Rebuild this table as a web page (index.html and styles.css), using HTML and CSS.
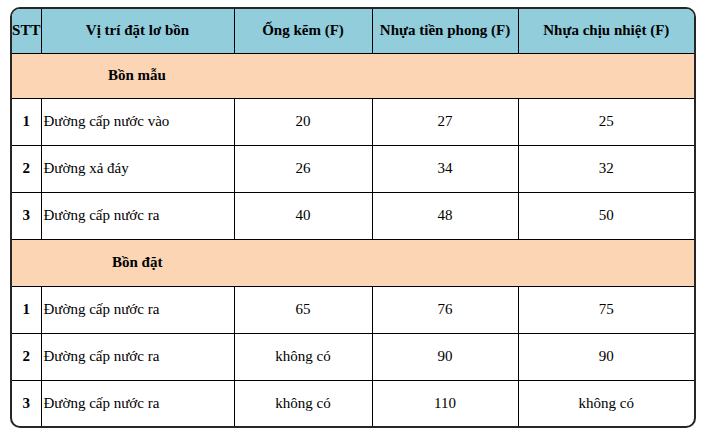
FILE: index.html
```html
<!DOCTYPE html>
<html lang="vi">
<head>
<meta charset="utf-8">
<link rel="stylesheet" href="styles.css">
</head>
<body>
<div class="frame">
<table class="grid">
<colgroup>
<col class="c-stt"><col class="c-pos"><col class="c-zinc"><col class="c-tp"><col class="c-heat">
</colgroup>
<thead>
<tr class="head">
<th>STT</th><th>Vị trí đặt lơ bồn</th><th>Ống kẽm (F)</th><th>Nhựa tiền phong (F)</th><th>Nhựa chịu nhiệt (F)</th>
</tr>
</thead>
<tbody>
<tr class="section"><td colspan="5"><span class="sec-a">Bồn mẫu</span></td></tr>
<tr class="row"><td class="stt">1</td><td class="name">Đường cấp nước vào</td><td>20</td><td>27</td><td>25</td></tr>
<tr class="row"><td class="stt">2</td><td class="name">Đường xả đáy</td><td>26</td><td>34</td><td>32</td></tr>
<tr class="row"><td class="stt">3</td><td class="name">Đường cấp nước ra</td><td>40</td><td>48</td><td>50</td></tr>
<tr class="section section-b"><td colspan="5"><span class="sec-b">Bồn đặt</span></td></tr>
<tr class="row"><td class="stt">1</td><td class="name">Đường cấp nước ra</td><td>65</td><td>76</td><td>75</td></tr>
<tr class="row"><td class="stt">2</td><td class="name">Đường cấp nước ra</td><td>không có</td><td>90</td><td>90</td></tr>
<tr class="row"><td class="stt">3</td><td class="name">Đường cấp nước ra</td><td>không có</td><td>110</td><td>không có</td></tr>
</tbody>
</table>
</div>
</body>
</html>
```

FILE: styles.css
```css
html, body {
  margin: 0;
  padding: 0;
  background: #ffffff;
}
body {
  font-family: "Liberation Serif", "Times New Roman", serif;
  color: #000;
  font-size: 15px;
}
.frame {
  margin: 7px 0 0 10px;
  width: 686px;
  height: 421px;
  box-sizing: border-box;
  border: 2px solid #262626;
  border-radius: 10px;
  overflow: hidden;
}
.grid {
  width: 682px;
  border-collapse: collapse;
  table-layout: fixed;
}
.c-stt { width: 29px; }
.c-pos { width: 193px; }
.c-zinc { width: 138px; }
.c-tp { width: 146px; }
.c-heat { width: 176px; }
.grid th, .grid td {
  border: 1px solid #000;
  padding: 0 2px;
  text-align: center;
  vertical-align: middle;
  overflow: hidden;
  white-space: nowrap;
}
.grid tr > :first-child { border-left: none; }
.grid tr > :last-child { border-right: none; }
.grid thead tr:first-child > * { border-top: none; }
.grid tbody tr:last-child > * { border-bottom: none; }
.head {
  height: 44px;
  background: #92cddc;
}
.head th {
  font-weight: bold;
  font-size: 15px;
  padding: 0;
}
.section {
  height: 45px;
  background: #fcd5b4;
}
.section-b {
  height: 47px;
}
.section td {
  text-align: left;
  font-weight: bold;
}
.sec-a { padding-left: 94px; }
.sec-b { padding-left: 98px; }
.row { height: 47px; }
.stt { font-weight: bold; }
.name { text-align: left !important; }
```
